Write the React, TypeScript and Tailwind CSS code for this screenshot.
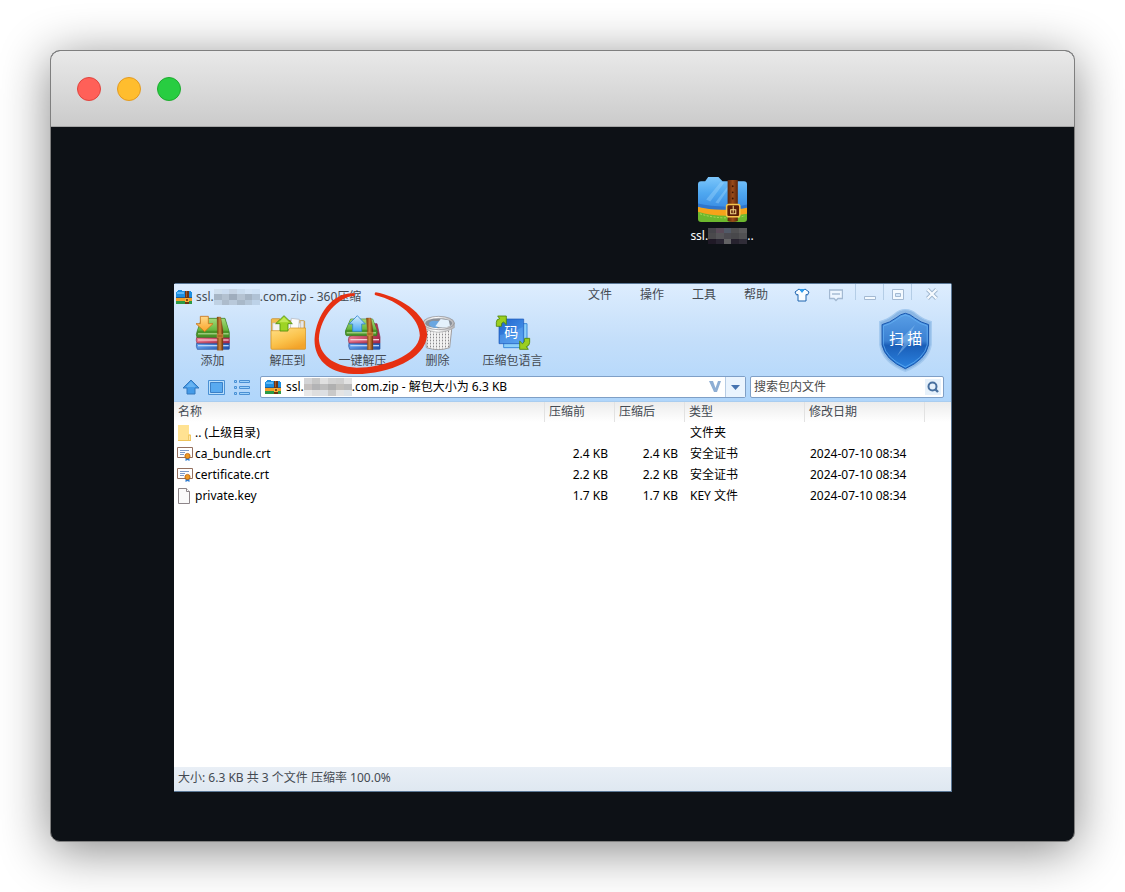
import { useState } from 'react';

const uiFont = "font-['Noto_Sans','Noto_Sans_CJK_SC',sans-serif]";

type FileKind = 'folder' | 'cert' | 'file';

interface Entry {
  name: string;
  kind: FileKind;
  before: string;
  after: string;
  type: string;
  modified: string;
}

const entries: Entry[] = [
  { name: '.. (上级目录)', kind: 'folder', before: '', after: '', type: '文件夹', modified: '' },
  { name: 'ca_bundle.crt', kind: 'cert', before: '2.4 KB', after: '2.4 KB', type: '安全证书', modified: '2024-07-10 08:34' },
  { name: 'certificate.crt', kind: 'cert', before: '2.2 KB', after: '2.2 KB', type: '安全证书', modified: '2024-07-10 08:34' },
  { name: 'private.key', kind: 'file', before: '1.7 KB', after: '1.7 KB', type: 'KEY 文件', modified: '2024-07-10 08:34' },
];

const menus = ['文件', '操作', '工具', '帮助'];

/* ---------- icons ---------- */

function ZipIcon({ className }: { className: string }) {
  return (
    <svg viewBox="0 0 48 44" className={className} aria-hidden="true">
      <defs>
        <linearGradient id="zipBlue" x1="0" y1="0" x2="0" y2="1">
          <stop offset="0" stopColor="#7cc6fb" />
          <stop offset="0.5" stopColor="#4fa8f0" />
          <stop offset="1" stopColor="#3a8ce2" />
        </linearGradient>
        <linearGradient id="zipStrap" x1="0" y1="0" x2="1" y2="0">
          <stop offset="0" stopColor="#5c2408" />
          <stop offset="0.5" stopColor="#9a4c1a" />
          <stop offset="1" stopColor="#5c2408" />
        </linearGradient>
      </defs>
      <path d="M0 32h48v9q0 3-3 3H3q-3 0-3-3z" fill="#6cb82e" />
      <path d="M0 28h48v8q-10 2-20 2-16 0-28-4z" fill="#f5a31a" />
      <path d="M0 7q0-3 3-3h4l3-4h10l4 4h21q3 0 3 3v22q-10 2-24 2Q10 31 0 29z" fill="url(#zipBlue)" />
      <path d="M0 26q12 3 28 3 12 0 20-2v3q-10 2-24 2Q10 32 0 29z" fill="#2f76cc" />
      <path d="M8 22 22 5h4L12 24zM17 25 30 8h2L20 26z" fill="#a9dcff" opacity="0.35" />
      <path d="M2 36q12 4 26 4 12 0 18-2" fill="none" stroke="#c4e46a" strokeWidth="0.7" strokeDasharray="2 1.4" />
      <path d="M29 3h10v40q-5 2-10 0z" fill="url(#zipStrap)" />
      <circle cx="34" cy="9" r="0.9" fill="#3a1504" />
      <circle cx="34" cy="15" r="0.9" fill="#3a1504" />
      <circle cx="34" cy="21" r="0.9" fill="#3a1504" />
      <rect x="28" y="27" width="13" height="12" rx="2" fill="#5a1c06" stroke="#f6c54c" strokeWidth="1.5" />
      <path d="M34.500 28v7M32 32h5v4h-5z" fill="none" stroke="#f6d98a" strokeWidth="1" />
    </svg>
  );
}

function SmallZipIcon() {
  return (
    <svg viewBox="0 0 16 14" shapeRendering="crispEdges" className="h-[14px] w-4 shrink-0" aria-hidden="true">
      <path d="M0 10h16v4H0z" fill="#2c9a46" />
      <path d="M0 8h16v3H0z" fill="#f2a02a" />
      <path d="M0 2h1V1h1V0h4v1h9v1h1v6H0z" fill="#1d8fe0" />
      <path d="M1 2h7v2H1z" fill="#5db8f6" />
      <path d="M0 7h16v1H0z" fill="#1b5e9c" />
      <path d="M9 1h4v13H9z" fill="#6e3413" />
      <path d="M10 1h1v6h-1z" fill="#a55a25" />
      <path d="M9 8h4v4H9z" fill="#f6b23c" />
      <path d="M10 9h2v2h-2z" fill="#8a4416" />
    </svg>
  );
}

function BookDefs() {
  return (
    <defs>
      <linearGradient id="bookGreen" x1="0" y1="0" x2="0" y2="1">
        <stop offset="0" stopColor="#a4d97a" />
        <stop offset="1" stopColor="#64b53c" />
      </linearGradient>
      <linearGradient id="bookBlue" x1="0" y1="0" x2="1" y2="0">
        <stop offset="0" stopColor="#5d9bea" />
        <stop offset="1" stopColor="#2254ad" />
      </linearGradient>
      <linearGradient id="bookRed" x1="0" y1="0" x2="1" y2="0">
        <stop offset="0" stopColor="#e9768c" />
        <stop offset="1" stopColor="#a92a4c" />
      </linearGradient>
      <linearGradient id="bookStrap" x1="0" y1="0" x2="1" y2="0">
        <stop offset="0" stopColor="#7a3e0c" />
        <stop offset="0.5" stopColor="#d08a3e" />
        <stop offset="1" stopColor="#6a3208" />
      </linearGradient>
      <linearGradient id="arrowGold" x1="0" y1="0" x2="0" y2="1">
        <stop offset="0" stopColor="#ffd98a" />
        <stop offset="1" stopColor="#fba428" />
      </linearGradient>
      <linearGradient id="arrowBlue" x1="0" y1="0" x2="0" y2="1">
        <stop offset="0" stopColor="#d8f0ff" />
        <stop offset="1" stopColor="#4aa8f4" />
      </linearGradient>
    </defs>
  );
}

function AddIcon() {
  return (
    <svg viewBox="0 0 108 108" className="h-9 w-9" aria-hidden="true">
      <BookDefs />
      <path d="M5 84h98v17q0 2-2 2H7q-5-9-2-19z" fill="url(#bookBlue)" stroke="#234f98" strokeWidth="2" />
      <path d="M9 90h92v4H9z" fill="#b9d6f7" />
      <path d="M5 67h98v17H6q-4-8-1-17z" fill="url(#bookRed)" stroke="#8c2744" strokeWidth="2" />
      <path d="M9 73h92v4H9z" fill="#f3c3cc" />
      <path d="M20 10h70l13 42v15H6q-4-8 0-17z" fill="#4a9428" stroke="#34751f" strokeWidth="2" />
      <path d="M20 11h69l12 36H8z" fill="url(#bookGreen)" />
      <path d="M9 55h92v3H9z" fill="#c3e6a4" />
      <path d="M66 6h11l7 40v60H67V46z" fill="url(#bookStrap)" stroke="#8a4c18" strokeWidth="1" />
      <path d="M66 58h18v10H66z" fill="#b06a28" stroke="#e6b060" strokeWidth="1" />
      <path d="M16 4h24v22h14L29 50 3 26h13z" fill="url(#arrowGold)" stroke="#c8741c" strokeWidth="2.500" />
    </svg>
  );
}

function OneClickIcon() {
  return (
    <svg viewBox="0 0 108 108" className="h-9 w-9" aria-hidden="true">
      <BookDefs />
      <path d="M12 84h93v17q0 2-2 2H14q-5-9-2-19z" fill="url(#bookBlue)" stroke="#234f98" strokeWidth="2" />
      <path d="M16 90h86v4H16z" fill="#b9d6f7" />
      <path d="M84 26h12l9 40v18H12q-4-9 0-18z" fill="url(#bookRed)" stroke="#8c2744" strokeWidth="2" />
      <path d="M16 72h86v4H16z" fill="#f6d3d8" />
      <path d="M17 12h66l14 38-2 12H4q-6-6-2-16z" fill="#4a9428" stroke="#34751f" strokeWidth="2" />
      <path d="M17 13h66l12 31H4z" fill="url(#bookGreen)" />
      <path d="M5 52h88v3H5z" fill="#c3e6a4" />
      <path d="M64 9h14l6 36v59H67V45z" fill="url(#bookStrap)" stroke="#8a4c18" strokeWidth="1" />
      <path d="M66 52h18v10H66z" fill="#b06a28" stroke="#e6b060" strokeWidth="1" />
      <path d="M37 2 61 27H50v22H23V27H12z" fill="url(#arrowBlue)" stroke="#3385cf" strokeWidth="2.500" />
    </svg>
  );
}

function ExtractIcon() {
  return (
    <svg viewBox="0 0 108 108" className="h-9 w-9" aria-hidden="true">
      <defs>
        <linearGradient id="folderGold" x1="0" y1="0" x2="0.6" y2="1">
          <stop offset="0" stopColor="#ffe088" />
          <stop offset="0.6" stopColor="#fbc34c" />
          <stop offset="1" stopColor="#f3a42a" />
        </linearGradient>
      </defs>
      <path d="M4 14q0-3 3-3h22l5 6h67q3 0 3 3v79H4z" fill="#f2bd50" stroke="#c58416" strokeWidth="2" />
      <path d="M8 24h84v30H8z" fill="#f4f4f4" stroke="#b6b9be" strokeWidth="2" />
      <path d="m64 10 24 3-3 36H60z" fill="#fbfbfb" stroke="#aeb2b8" strokeWidth="2" />
      <path d="M92 18h9v34h-9z" fill="#e8e8ea" stroke="#aeb2b8" strokeWidth="1" />
      <path d="M3 47h48l10-8h46v61q0 3-3 3H6q-3 0-3-3z" fill="url(#folderGold)" stroke="#d08c18" strokeWidth="2" />
      <path d="M42 2 67 26H54v22H30V26H17z" fill="#9ed424" stroke="#4f8e0c" strokeWidth="2.500" />
      <path d="m42 7 15 15H27z" fill="#c9ec62" opacity="0.8" />
    </svg>
  );
}

function TrashIcon() {
  return (
    <svg viewBox="0 0 108 108" className="h-9 w-9" aria-hidden="true">
      <defs>
        <pattern id="mesh" width="9" height="9" patternUnits="userSpaceOnUse">
          <rect width="9" height="9" fill="#f2f1f1" />
          <rect x="3" y="2" width="3" height="5" fill="#8b898c" />
        </pattern>
        <linearGradient id="binRim" x1="0" y1="0" x2="1" y2="0">
          <stop offset="0" stopColor="#c2c2c4" />
          <stop offset="0.4" stopColor="#ffffff" />
          <stop offset="1" stopColor="#b4b4b7" />
        </linearGradient>
      </defs>
      <path d="M14 34 19 98q36 12 70 0l7-64z" fill="url(#mesh)" stroke="#a09ea0" strokeWidth="3" />
      <path d="M9 24v14q46 28 94 0V24z" fill="url(#binRim)" stroke="#a5a4a6" strokeWidth="2" />
      <ellipse cx="56" cy="24" rx="47" ry="20" fill="url(#binRim)" stroke="#8b8a8c" strokeWidth="2" />
      <ellipse cx="56" cy="25" rx="40" ry="15" fill="#8a9099" />
      <path d="M28 31q-4-12 12-14l18 2-6 20q-16 0-24-8z" fill="#6aa6e0" />
      <path d="M46 34 62 12l24 4 4 16q-16 10-44 2z" fill="#e4f1fc" />
    </svg>
  );
}

function LanguageIcon() {
  return (
    <svg viewBox="0 0 108 108" className="h-9 w-9" aria-hidden="true">
      <defs>
        <linearGradient id="langBlue" x1="0" y1="0" x2="1" y2="1">
          <stop offset="0" stopColor="#2364cc" />
          <stop offset="1" stopColor="#4a9cf0" />
        </linearGradient>
      </defs>
      <path d="M26 26h70v72H26z" fill="#8cd0fa" stroke="#3a8adb" strokeWidth="3" />
      <path d="M12 12h74v74H12z" fill="url(#langBlue)" stroke="#1c58b8" strokeWidth="2" />
      <path d="M15 60q34-4 68-24v48H15z" fill="#7ebcf8" opacity="0.3" />
      <text x="49" y="65" textAnchor="middle" fontSize="42" fill="#fff" className="font-['Noto_Sans_CJK_SC',sans-serif]">码</text>
      <path d="M4 34V22Q4 12 14 11L8 3h26v26l-8-8q-8 1-7 13z" fill="#9bcf20" stroke="#4d8409" strokeWidth="2.500" />
      <path d="M104 70v12q0 10-10 13l6 8H74V78l8 8q8-2 7-16z" fill="#9bcf20" stroke="#4d8409" strokeWidth="2.500" />
    </svg>
  );
}

function ShieldIcon() {
  return (
    <svg viewBox="0 0 159 190" className="h-[63px] w-[53px]" aria-hidden="true">
      <defs>
        <linearGradient id="shieldFill" x1="0" y1="0" x2="0" y2="1">
          <stop offset="0" stopColor="#5a9fe6" />
          <stop offset="0.5" stopColor="#3a80d2" />
          <stop offset="0.58" stopColor="#1a5eb8" />
          <stop offset="1" stopColor="#2b83e0" />
        </linearGradient>
      </defs>
      <path d="M79 2q20 0 34 14 20 16 44 22v70q-8 52-78 80Q9 160 2 108V38q24-6 44-22Q60 2 79 2z" fill="#8ab6e4" stroke="#a3c9ef" strokeWidth="4" />
      <path d="M79 13q14 2 28 14 18 14 42 20v61q-8 44-70 72-62-28-70-72V47q24-6 42-20 14-12 28-14z" fill="url(#shieldFill)" stroke="#1756ad" strokeWidth="3" />
      <path d="M79 18q12 2 25 13 18 14 41 20v57q-8 40-66 67-58-27-66-67V51q23-6 41-20 13-11 25-13z" fill="none" stroke="#69b6f7" strokeWidth="2" />
      <path d="M108 48 52 104h24l-22 38 58-60H90z" fill="#9cccf7" opacity="0.45" />
      <text x="80" y="105" textAnchor="middle" fontSize="45" fill="#fff" className="font-['Noto_Sans_CJK_SC',sans-serif]">扫 描</text>
    </svg>
  );
}

function FileIcon({ kind }: { kind: FileKind }) {
  if (kind === 'folder') {
    return (
      <svg viewBox="0 0 16 16" className="h-4 w-4 shrink-0" aria-hidden="true">
        <path d="M1 0h11v9l2 1v6H1z" fill="#fbd978" />
        <path d="M1 0h11v9h-1v6H1z" fill="#ffe292" />
        <path d="M11.500 15.500v-5l2-.5v5.500z" fill="#ffe8a8" stroke="#e8b94c" strokeWidth="0.6" />
        <path d="M1 15h13v1H1z" fill="#eec35a" />
      </svg>
    );
  }
  if (kind === 'cert') {
    return (
      <svg viewBox="0 0 16 14" className="h-[14px] w-4 shrink-0" aria-hidden="true">
        <path d="M.5.500h15v10H.5z" fill="#fff" stroke="#94705f" />
        <path d="M3 3.500h9M3 5.500h5M3 7.500h4" stroke="#7d9bc8" />
        <path d="M8.500 9v5l2-1 2 1V9z" fill="#2d7cd3" />
        <circle cx="10.500" cy="9" r="2.600" fill="#ed9a25" stroke="#b65f10" strokeWidth="0.8" />
      </svg>
    );
  }
  return (
    <svg viewBox="0 0 16 16" className="h-4 w-4 shrink-0" aria-hidden="true">
      <path d="M1.500.500h8l3 3v12h-11z" fill="#fafafa" stroke="#8d8589" />
      <path d="M9.500.500v3h3" fill="#fff" stroke="#8d8589" />
    </svg>
  );
}

/* Pixelated patch over the hidden part of a name */
function Mosaic({ colors, cols, className }: { colors: string[]; cols: number; className: string }) {
  const rows = colors.length / cols;
  return (
    <svg
      viewBox={`0 0 ${cols} ${rows}`}
      preserveAspectRatio="none"
      shapeRendering="crispEdges"
      className={className}
      aria-hidden="true"
    >
      {colors.map((c, i) => (
        <rect key={i} x={i % cols} y={Math.floor(i / cols)} width="1" height="1" fill={c} />
      ))}
    </svg>
  );
}

const titleMosaic = [
  '#cfdfee', '#cbdcf0', '#c5d3e3', '#cadcee', '#d2e3f5', '#cee1f5',
  '#a7b6c6', '#b3c1d0', '#9fadbd', '#b5c3d2', '#a5b4c4', '#b0c2d5',
  '#bfd1e3', '#adbccc', '#b9c9da', '#a9b9c9', '#b4c6d8', '#bdd2e8',
];

const addressMosaic = [
  '#d4d4d6', '#c6c6c6', '#e0e0e0', '#d2d2d2', '#cfcfcf', '#e2e2e2',
  '#c4c0bf', '#b3b3b5', '#bdbdbd', '#b0b0b0', '#c0bebb', '#bababa',
  '#e8e8e8', '#dedede', '#dcdfe3', '#c9c9c9', '#e4e4e4', '#dde3e8',
];

const desktopMosaic = [
  '#45444a', '#594a58', '#515967', '#505052', '#5a5a5c',
  '#4a494c', '#555458', '#4b4a50', '#48484b', '#515153',
  '#1f1926', '#292532', '#626264', '#26222e', '#302d38',
];

/* ---------- window parts ---------- */

const tools = [
  { label: '添加', icon: <AddIcon /> },
  { label: '解压到', icon: <ExtractIcon /> },
  { label: '一键解压', icon: <OneClickIcon /> },
  { label: '删除', icon: <TrashIcon /> },
  { label: '压缩包语言', icon: <LanguageIcon /> },
];

function TitleBar() {
  return (
    <div className="flex h-[25px] items-start justify-between text-[#444a52]">
      <div className="flex h-[26px] items-center pl-0.5">
        <SmallZipIcon />
        <h1 className="ml-1 flex items-center whitespace-pre">
          ssl.
          <Mosaic colors={titleMosaic} cols={6} className="h-4 w-[46px]" />
          .com.zip - 360压缩
        </h1>
      </div>
      <div className="flex items-start">
        <nav className="mr-[26px] flex h-[22px] items-center gap-7">
          {menus.map((m) => (
            <button key={m}>{m}</button>
          ))}
        </nav>
        <button aria-label="换肤" className="mr-[19px] flex h-[22px] items-center">
          <svg viewBox="0 0 16 14" className="h-[14px] w-4">
            <path d="M5 1 1 4l1.500 3L4 6.500V13h8V6.500l1.500.5L15 4l-4-3-3 2.500z" fill="#f8fcff" stroke="#1b62ae" strokeLinejoin="round" />
            <path d="M5 1h6L8 5z" fill="#2d9cec" />
          </svg>
        </button>
        <button aria-label="反馈" className="mr-3 flex h-[22px] items-center">
          <svg viewBox="0 0 14 13" className="h-[13px] w-[14px]">
            <path d="M.5 1h13v8.500H9l-2 2-2-2H.5z" fill="#eef6ff" stroke="#a3b9d2" strokeWidth="1.400" />
            <path d="M3 5h8" stroke="#a3b9d2" strokeWidth="1.400" />
          </svg>
        </button>
        <button aria-label="最小化" className="flex h-4 w-7 items-end justify-center border-l border-[#b4cde6]">
          <svg viewBox="0 0 12 4" className="h-1 w-3">
            <path d="M.5.500h11v3H.5z" fill="#f4faff" stroke="#a3b9d2" />
          </svg>
        </button>
        <button aria-label="最大化" className="flex h-4 w-7 items-end justify-center border-l border-[#b4cde6]">
          <svg viewBox="0 0 12 11" className="h-[11px] w-3">
            <path d="M.5.500h11v10H.5z" fill="#f4faff" stroke="#a3b9d2" />
            <path d="M3.500 4.500h5v3h-5z" fill="#d5e8fb" stroke="#a3b9d2" />
          </svg>
        </button>
        <button aria-label="关闭" className="flex h-4 w-10 items-end justify-center border-l border-[#b4cde6]">
          <svg viewBox="0 0 12 12" className="h-3 w-3">
            <path d="m1.500 1.500 9 9M10.500 1.500l-9 9" stroke="#9fb6cf" strokeWidth="4" />
            <path d="m1.500 1.500 9 9M10.500 1.500l-9 9" stroke="#f7fbff" strokeWidth="2.200" />
          </svg>
        </button>
      </div>
    </div>
  );
}

function Toolbar() {
  return (
    <div className="flex h-[66px] items-start justify-between pr-[19px] pl-px">
      <div className="relative flex pt-1.5">
        {tools.map((tool) => (
          <button key={tool.label} className="flex w-[75px] flex-col items-center leading-5 whitespace-nowrap text-[#444a52]">
            {tool.icon}
            {tool.label}
          </button>
        ))}
        {/* Hand-drawn ring around the one-click button */}
        <svg
          viewBox="12 34 342 250"
          className="pointer-events-none absolute -top-[17px] left-[139px] h-[83px] w-[114px]"
          aria-hidden="true"
        >
          <path
            d="M197 35C262 46 354 98 352 165C347 237 230 284 130 281C48 277 11 230 13 175C19 98 70 32 135 38L133 46C84 48 30 107 26 175C28 220 64 258 140 262C220 262 325 226 330 165C330 113 266 60 197 44Q191 40 197 35Z"
            fill="#e63012"
          />
        </svg>
      </div>
      <button aria-label="扫描">
        <ShieldIcon />
      </button>
    </div>
  );
}

function AddressRow() {
  const [query, setQuery] = useState('');

  return (
    <div className="flex h-[26px] items-start pt-px pr-[7px] pl-2">
      <div className="mr-2.5 flex h-[22px] items-center gap-2">
        <button aria-label="上级目录">
          <svg viewBox="0 0 18 16" className="h-4 w-[18px]">
            <path d="M9 1 17 9h-4v6H5V9H1z" fill="#459be8" stroke="#3478bd" strokeLinejoin="round" />
            <path d="M9 2.500 14 8H4z" fill="#80c4f8" opacity="0.6" />
          </svg>
        </button>
        <button aria-label="视图">
          <svg viewBox="0 0 17 15" className="h-[15px] w-[17px]">
            <path d="M.5.500h16v14H.5z" fill="#b9defb" stroke="#4a90d4" />
            <path d="M2.500 2.500h12v10h-12z" fill="#59aaf0" stroke="#3b80c8" />
          </svg>
        </button>
        <button aria-label="列表">
          <svg viewBox="0 0 17 15" className="h-[15px] w-[17px]" fill="#9ed2fa" stroke="#4a90d4">
            <path d="M1.500.500h2v2h-2zM1.500 6.500h2v2h-2zM1.500 12.500h2v2h-2zM6.500.500h10v2h-10zM6.500 6.500h10v2h-10zM6.500 12.500h10v2h-10z" />
          </svg>
        </button>
      </div>

      <div className="mr-1 flex h-[22px] flex-1 items-center rounded-xs border border-[#7f9fc6] bg-white pl-1 text-black">
        <SmallZipIcon />
        <span className="ml-[5px] flex flex-1 items-center whitespace-pre">
          ssl.
          <Mosaic colors={addressMosaic} cols={6} className="h-[18px] w-12" />
          .com.zip - 解包大小为 6.3 KB
        </span>
        <button aria-label="校验" className="mr-1">
          <svg viewBox="0 0 12 12" className="h-3 w-3">
            <path d="M0 0h4l2.500 7L9 0h3L8 11H5z" fill="#8eaed4" />
          </svg>
        </button>
        <button aria-label="展开" className="flex h-5 w-5 items-center justify-center border-l border-[#b7cce4] bg-[#eaf4fe]">
          <svg viewBox="0 0 9 5" className="h-[5px] w-[9px]">
            <path d="M0 0h9L4.500 5z" fill="#4674b0" />
          </svg>
        </button>
      </div>

      <div className="flex h-[22px] w-[194px] items-center rounded-xs border border-[#7f9fc6] bg-white">
        <input
          aria-label="搜索包内文件"
          placeholder="搜索包内文件"
          value={query}
          onChange={(e) => setQuery(e.target.value)}
          className="min-w-0 flex-1 pl-[3px] outline-none placeholder:text-[#4a4a4a]"
        />
        <button aria-label="搜索" className="mr-0.5 flex h-4 w-4 items-center justify-center bg-[#e6f1fb]">
          <svg viewBox="0 0 12 12" className="h-3 w-3" fill="none" stroke="#48709f">
            <circle cx="5.500" cy="5.500" r="4" strokeWidth="2" />
            <path d="m8 8 3 3" strokeWidth="2.400" />
          </svg>
        </button>
      </div>
    </div>
  );
}

function FileTable() {
  const head = 'border-r border-[#e2e2e2] pl-1 text-left font-normal';

  return (
    <table className="w-full table-fixed border-separate border-spacing-0 text-black">
      <colgroup>
        <col />
        <col className="w-[70px]" />
        <col className="w-[70px]" />
        <col className="w-[120px]" />
        <col className="w-[120px]" />
        <col className="w-[26px]" />
      </colgroup>
      <thead>
        <tr className="h-5 bg-linear-to-b from-[#ececec] to-white text-[#444a52]">
          <th className={head}>名称</th>
          <th className={head}>压缩前</th>
          <th className={head}>压缩后</th>
          <th className={head}>类型</th>
          <th className={head}>修改日期</th>
          <th />
        </tr>
      </thead>
      <tbody>
        {entries.map((e) => (
          <tr key={e.name} className="h-[21px]">
            <td>
              <div className="flex items-center gap-0.5 pl-[3px]">
                <FileIcon kind={e.kind} />
                {e.name}
              </div>
            </td>
            <td className="pr-[7px] text-right">{e.before}</td>
            <td className="pr-[7px] text-right">{e.after}</td>
            <td className="pl-[5px]">{e.type}</td>
            <td className="pl-[5px] whitespace-nowrap">{e.modified}</td>
            <td />
          </tr>
        ))}
      </tbody>
    </table>
  );
}

function ArchiveWindow() {
  return (
    <section className="flex flex-1 flex-col rounded-t-xs border-t border-r border-b border-[#5b7896] bg-white text-xs leading-[18px]">
      <header className="border-b border-[#a9cdf0] bg-linear-to-b from-[#ddedfe] via-[#c3defa] to-[#b0d6fb]">
        <TitleBar />
        <Toolbar />
        <AddressRow />
      </header>
      <div className="flex-1">
        <FileTable />
      </div>
      <footer className="h-6 bg-linear-to-b from-[#e9eff6] to-[#dfe8f1] pt-0.5 pl-1 text-[#444a52]">
        大小: 6.3 KB 共 3 个文件 压缩率 100.0%
      </footer>
    </section>
  );
}

export default function App() {
  return (
    <div className={`flex min-h-screen bg-white p-[50px] ${uiFont}`}>
      <main className="flex flex-1 flex-col overflow-hidden rounded-[10px] border border-[#7f7f7f] bg-[#0d1116] shadow-[0_8px_50px_rgba(0,0,0,0.48)]">
        <div className="flex h-[76px] items-center gap-4 border-b border-[#a5a5a5] bg-linear-to-b from-[#e9e9e9] to-[#cbcbcb] pl-[26px]">
          <button aria-label="关闭" className="h-6 w-6 rounded-full border border-[#e0443e] bg-[#ff6058]" />
          <button aria-label="最小化" className="h-6 w-6 rounded-full border border-[#e39a22] bg-[#ffbd2e]" />
          <button aria-label="缩放" className="h-6 w-6 rounded-full border border-[#1eab2f] bg-[#28cd41]" />
        </div>

        <div className="flex flex-1 flex-col pt-[50px] pr-[122px] pb-[49px] pl-[123px]">
          <figure className="mb-[38px] ml-[516px] flex w-16 flex-col items-center">
            <ZipIcon className="h-[45px] w-[49px]" />
            <figcaption className="mt-[5px] flex items-center text-xs leading-[18px] whitespace-pre text-white">
              ssl.
              <Mosaic colors={desktopMosaic} cols={5} className="h-4 w-[39px]" />
              ..
            </figcaption>
          </figure>
          <ArchiveWindow />
        </div>
      </main>
    </div>
  );
}
